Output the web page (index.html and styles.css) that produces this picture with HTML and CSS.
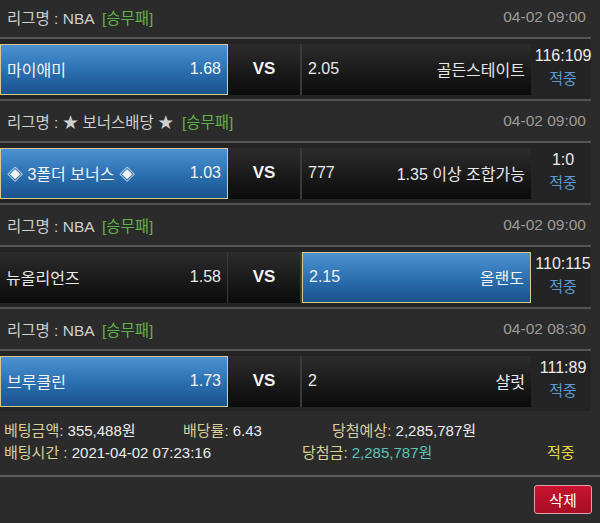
FILE: index.html
```html
<!DOCTYPE html>
<html lang="ko">
<head>
  <meta charset="UTF-8" />
  <meta name="viewport" content="width=device-width, initial-scale=1.0"/>
  <title>베팅내역</title>
  <link rel="stylesheet" href="styles.css">
</head>
<body>

  <div class="bet-list">
    <div class="game first">
      <div class="league">
        <span>리그명 : NBA <em>[승무패]</em></span>
        <span class="date">04-02 09:00</span>
      </div>
      <div class="match">
        <div class="team home picked"><span>마이애미</span><span>1.68</span></div>
        <div class="vs">VS</div>
        <div class="team away"><span>2.05</span><span>골든스테이트</span></div>
        <div class="result"><b>116:109</b><span>적중</span></div>
      </div>
    </div>

    <div class="game">
      <div class="league">
        <span>리그명 : ★ 보너스배당 ★ <em>[승무패]</em></span>
        <span class="date">04-02 09:00</span>
      </div>
      <div class="match">
        <div class="team home picked"><span>◈ 3폴더 보너스 ◈</span><span>1.03</span></div>
        <div class="vs">VS</div>
        <div class="team away"><span>777</span><span>1.35 이상 조합가능</span></div>
        <div class="result"><b>1:0</b><span>적중</span></div>
      </div>
    </div>

    <div class="game">
      <div class="league">
        <span>리그명 : NBA <em>[승무패]</em></span>
        <span class="date">04-02 09:00</span>
      </div>
      <div class="match">
        <div class="team home"><span>뉴올리언즈</span><span>1.58</span></div>
        <div class="vs">VS</div>
        <div class="team away picked"><span>2.15</span><span>올랜도</span></div>
        <div class="result"><b>110:115</b><span>적중</span></div>
      </div>
    </div>

    <div class="game">
      <div class="league">
        <span>리그명 : NBA <em>[승무패]</em></span>
        <span class="date">04-02 08:30</span>
      </div>
      <div class="match">
        <div class="team home picked"><span>브루클린</span><span>1.73</span></div>
        <div class="vs">VS</div>
        <div class="team away"><span>2</span><span>샬럿</span></div>
        <div class="result"><b>111:89</b><span>적중</span></div>
      </div>
    </div>
  </div>

  <div class="summary">
    <div class="summary-row">
      <span class="col-a"><i>베팅금액:</i> 355,488원</span>
      <span class="col-b"><i>배당률:</i> 6.43</span>
      <span><i>당첨예상:</i> 2,285,787원</span>
    </div>
    <div class="summary-row">
      <span class="col-c"><i>배팅시간 :</i> 2021-04-02 07:23:16</span>
      <span class="col-d"><i>당첨금:</i> <strong>2,285,787원</strong></span>
      <span class="hit">적중</span>
    </div>
  </div>

  <div class="actions">
    <button type="button">삭제</button>
  </div>

</body>
</html>
```

FILE: styles.css
```css
* {
  box-sizing: border-box;
}

body {
  margin: 0;
  background: #2b2b2b;
  color: #e6e6e6;
  font-family: "Liberation Sans", "Noto Sans CJK KR", sans-serif;
  font-size: 15px;
  overflow: hidden;
}

.bet-list {
  width: 591px;
  margin-top: -3px;
}

.game {
  border-bottom: 2px solid #525252;
}

.game:last-child {
  border-bottom: none;
}

.league {
  height: 42px;
  display: flex;
  align-items: center;
  justify-content: space-between;
  padding: 0 5px 0 7px;
  font-size: 15.5px;
  color: #cfcfcf;
  border-bottom: 2px solid #575757;
}

.league em {
  font-style: normal;
  color: #62b24a;
  margin-left: 4px;
}

.league .date {
  color: #9b9b9b;
}

.match {
  height: 60px;
  display: grid;
  grid-template-columns: 228px 74px 229px 60px;
  align-items: center;
  background: #242424;
}

.team,
.vs {
  height: 51px;
  background: linear-gradient(#2c2c2c, #0b0b0b);
}

.team {
  display: flex;
  align-items: center;
  justify-content: space-between;
  padding: 0 6px;
  font-size: 16px;
  color: #e8e8e8;
}

.home {
  border-right: 1px solid #3a3a3a;
}

.vs {
  display: flex;
  align-items: center;
  justify-content: center;
  font-size: 17px;
  font-weight: bold;
  color: #f2f2f2;
  border-right: 2px solid #3a3a3a;
}

.team.picked {
  background: linear-gradient(#4c92d3, #2a6eae 55%, #1c528c);
  border: 1px solid #d6cb8c;
  color: #f4f4f4;
}

.result {
  display: flex;
  flex-direction: column;
  align-items: center;
  line-height: 23px;
  padding-left: 4px;
  margin-top: -4px;
}

.result b {
  font-weight: normal;
  font-size: 16px;
  color: #ececec;
}

.result span {
  color: #5c9ad2;
}

.summary {
  padding: 9px 0 11px 4px;
  border-bottom: 2px solid #5e5e5e;
}

.summary-row {
  display: flex;
  line-height: 22px;
  color: #ececec;
}

.summary i {
  font-style: normal;
  color: #d9cf9b;
}

.col-a {
  width: 179px;
}

.col-b {
  width: 149px;
}

.col-c {
  width: 298px;
}

.col-d {
  width: 245px;
}

.summary strong {
  font-weight: normal;
  color: #5cc3b8;
}

.hit {
  color: #e6d64c;
}

.actions {
  display: flex;
  justify-content: flex-end;
  padding: 8px 8px 0 0;
}

.actions button {
  width: 58px;
  height: 29px;
  background: linear-gradient(#c8132f, #a80d26);
  border: 1px solid #e2a2ab;
  border-radius: 3px;
  color: #fff;
  font-family: "Liberation Sans", "Noto Sans CJK KR", sans-serif;
  font-size: 15px;
  cursor: pointer;
}
```
